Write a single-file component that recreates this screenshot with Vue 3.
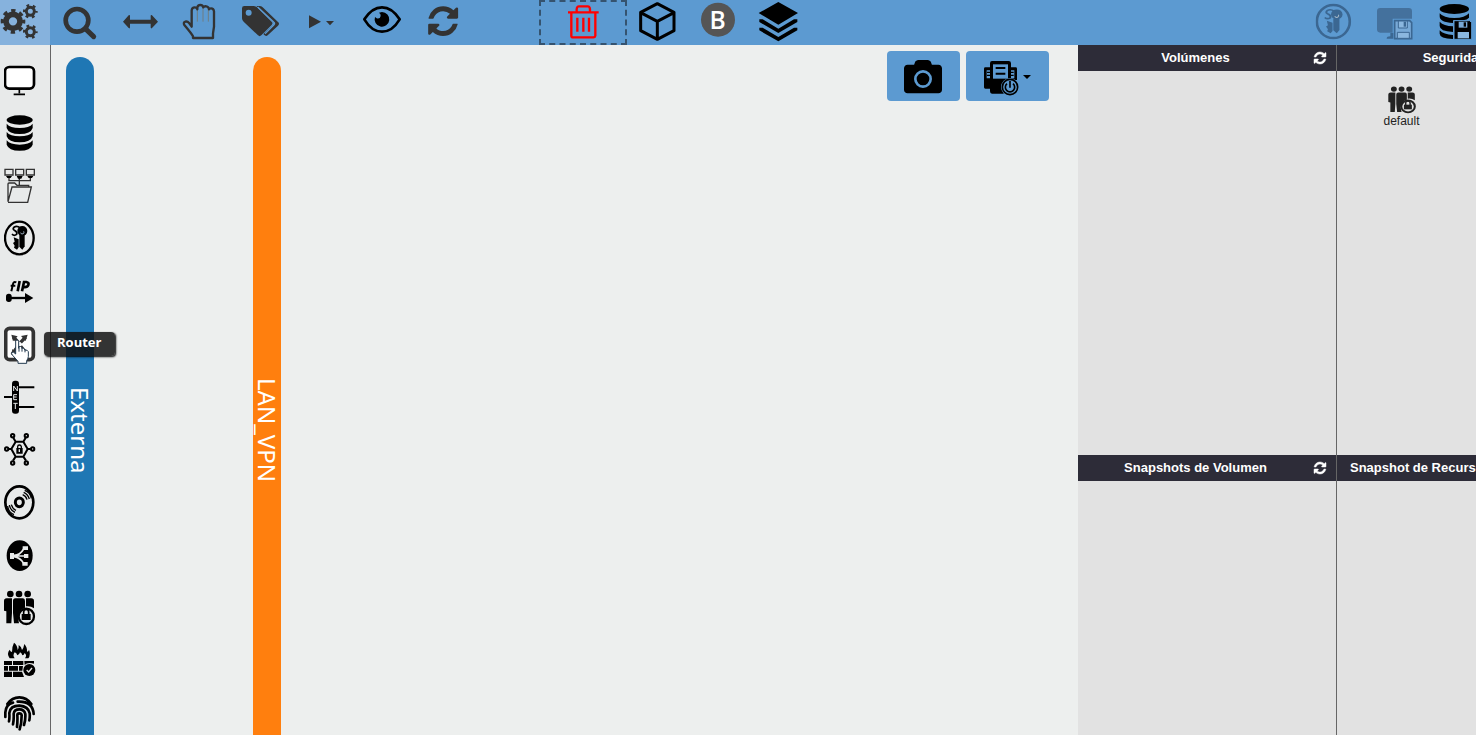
<script setup>
import { ref } from 'vue'

const networks = ref([
  { name: 'Externa', tone: 'blue' },
  { name: 'LAN_VPN', tone: 'orange' },
])

const panels = ref([
  { title: 'Volúmenes', items: [] },
  { title: 'Seguridad', items: ['default'] },
  { title: 'Snapshots de Volumen', items: [] },
  { title: 'Snapshot de Recursos', items: [], wide: true },
])

const refreshPath =
  'M1639 1056q0 5-1 7-64 268-268 434.5t-478 166.5q-146 0-282.5-55t-243.5-157l-129 129q-19 19-45 19t-45-19-19-45v-448q0-26 19-45t45-19h448q26 0 45 19t19 45-19 45l-137 137q71 66 161 102t187 36q134 0 250-65t186-179q11-17 53-117 8-23 30-23h192q13 0 22.5 9.5t9.5 22.5zm25-800v448q0 26-19 45t-45 19h-448q-26 0-45-19t-19-45 19-45l138-138q-148-137-349-137-134 0-250 65t-186 179q-11 17-53 117-8 23-30 23h-199q-13 0-22.5-9.5t-9.5-22.5v-7q65-268 270-434.5t480-166.5q146 0 284 55.5t245 156.5l130-129q19-19 45-19t45 19 19 45z'
</script>

<template>
  <div class="app">
    <svg class="defs" aria-hidden="true">
      <symbol id="people" viewBox="11 193 95 108" preserveAspectRatio="none">
        <circle cx="31" cy="205" r="10" /><circle cx="57" cy="205" r="10" /><circle cx="83" cy="205" r="10" />
        <path d="M12 226q0-8 8-8h16v44l-2 31H19v-36l-7-2zM39 226q0-8 7-8h23q6 0 6 8v20q-20 6-21 30l3 17H42l-3-31zM78 218h16q8 0 8 8v22q-10-8-24-6z" />
        <circle cx="79" cy="272" r="23" fill="none" stroke="currentColor" stroke-width="7" />
        <path d="M65 265h27v18H65z" />
        <path d="M71 266v-7a7.500 7.500 0 0 1 15 0v7" fill="none" stroke="currentColor" stroke-width="5" />
      </symbol>
      <symbol id="keys" viewBox="12 31 93 108" preserveAspectRatio="none">
        <ellipse cx="58" cy="85" rx="43" ry="49" fill="none" stroke="currentColor" stroke-width="7" />
        <circle cx="67" cy="64" r="15" />
        <path d="M58 76h16v34l-7 10-9-9z" />
        <path d="M41 83l15 6v24l-5 7-9-6 2-6-5-8 5-4z" />
        <path d="M61 55q-10-8-18-3-7 6 0 10 10 5 7 12-8 6-14-1" fill="none" stroke="currentColor" stroke-width="5" />
        <path d="M62 69a5 5 0 1 0 9-4" fill="none" stroke="#9fb3c4" stroke-width="3" />
      </symbol>
    </svg>

    <header class="toolbar">
      <button class="tool active" aria-label="Configuración">
        <svg width="50" height="45" viewBox="0 0 150 135">
          <circle cx="39" cy="64" r="21" fill="none" stroke="currentColor" stroke-width="17" />
          <circle cx="39" cy="64" r="32" fill="none" stroke="currentColor" stroke-width="10" stroke-dasharray="13 12.130" stroke-dashoffset="6.500" />
          <circle cx="91" cy="34" r="12" fill="none" stroke="currentColor" stroke-width="9" />
          <circle cx="91" cy="34" r="18" fill="none" stroke="currentColor" stroke-width="8" stroke-dasharray="8 10.850" stroke-dashoffset="4" />
          <circle cx="91" cy="95" r="12" fill="none" stroke="currentColor" stroke-width="9" />
          <circle cx="91" cy="95" r="18" fill="none" stroke="currentColor" stroke-width="8" stroke-dasharray="8 10.850" stroke-dashoffset="4" />
        </svg>
      </button>
      <button class="tool" aria-label="Buscar">
        <svg width="60" height="45" viewBox="150 0 180 135">
          <circle cx="231" cy="61" r="34" fill="none" stroke="currentColor" stroke-width="14" />
          <path d="M256 86l25 24" stroke="currentColor" stroke-width="15" stroke-linecap="round" />
        </svg>
      </button>
      <button class="tool" aria-label="Ancho">
        <svg width="60" height="45" viewBox="330 0 180 135">
          <path d="M369 65l17-19q4-3 4 2v11h62V48q0-5 4-2l18 19-18 19q-4 3-4-2V71h-62v11q0 5-4 2z" />
        </svg>
      </button>
      <button class="tool" aria-label="Mover">
        <svg width="60" height="45" viewBox="510 0 180 135">
          <path d="M592 29v36M609 22v43M625 29v36" fill="none" stroke="#6f7d82" stroke-width="3" />
          <path d="M575 76V31q1-9 9-9 7 0 8 6V22q2-7 9-7t9 7q2-4 9-3 7 1 8 9 1-3 6-3 8 0 9 9v46l-3 20v14H579v-5q-4-8-26-34-4-8 3-10 6-2 12 5l7 10z" fill="none" stroke="currentColor" stroke-width="7" stroke-linejoin="round" />
        </svg>
      </button>
      <button class="tool" aria-label="Etiquetas">
        <svg width="60" height="45" viewBox="0 0 180 135">
          <path fill-rule="evenodd" d="M36 25q0-7 7-7h28q6 0 10 4l44 43q5 5 0 10l-31 31q-5 5-10 0L41 65q-5-5-5-10zM56 29a9 9 0 1 0 0 18 9 9 0 0 0 0-18z" />
          <path d="M79 18h9q6 0 10 4l46 44q6 5 0 11l-31 29q-4 4-9 0l-4-4 32-29q2-3 0-5z" />
          <path d="M83 21l48 45q5 4 1 8l-27 27" fill="none" stroke="#5c9ad1" stroke-width="4" />
        </svg>
      </button>
      <button class="tool" aria-label="Ejecutar">
        <svg width="62" height="45" viewBox="180 0 186 135"><path d="M237 46l36 19-36 20zM288 63h24l-12 13z" /></svg>
      </button>
      <button class="tool black" aria-label="Ver">
        <svg width="60" height="45" viewBox="366 0 180 135">
          <path d="M403 58Q426 22 456 22T509 58Q487 95 456 95T403 58z" fill="none" stroke="currentColor" stroke-width="8" stroke-linejoin="round" />
          <path d="M456 36a22 22 0 1 1-21 15l5 4q10 3 12-7 1-6-5-10z" />
        </svg>
      </button>
      <button class="tool" aria-label="Actualizar">
        <svg width="62" height="45" viewBox="546 0 186 135"><path :d="refreshPath" transform="translate(587 11) scale(.0585)" /></svg>
      </button>
      <button class="tool trash" aria-label="Eliminar">
        <svg width="84" height="41" viewBox="33 6 252 123">
          <g fill="none" stroke="#ff0000" stroke-width="7">
            <path d="M114 37h92M124 38v69q0 5 6 5h60q5 0 6-5V38M140 35q-1-16 6-16h28q7 0 6 16" />
            <path d="M142 53v42M160 53v42M177 53v42" />
          </g>
        </svg>
      </button>
      <button class="tool black" aria-label="Recursos">
        <svg width="61" height="45" viewBox="291 0 183 135">
          <path d="M382 11l50 26v55l-50 26-50-26V37zM332 38l50 26 50-26M382 64v54" fill="none" stroke="currentColor" stroke-width="9" stroke-linejoin="round" />
        </svg>
      </button>
      <button class="tool" aria-label="Bloques">
        <svg width="60" height="45" viewBox="474 0 180 135">
          <circle cx="564" cy="59" r="51" fill="#555" />
          <text class="letter" x="563" y="86" text-anchor="middle">B</text>
        </svg>
      </button>
      <button class="tool black" aria-label="Capas">
        <svg width="60" height="45" viewBox="654 0 180 135">
          <path d="M745 6l59 33-59 35-59-35zM688 58h10l47 28 47-28h10v8l-57 33-57-33zM688 83h10l47 28 47-28h10v8l-57 33-57-33z" />
        </svg>
      </button>
      <div class="tools-end">
        <button class="tool off" aria-label="Llaves" disabled>
          <svg width="62" height="45" viewBox="36 0 186 135"><use href="#keys" x="77" y="10" width="107" height="109" /></svg>
        </button>
        <button class="tool off" aria-label="Guardar instancia" disabled>
          <svg width="60" height="45" viewBox="222 0 180 135">
            <path d="M261 34q0-10 10-10h85q10 0 10 10v22h-58v42h-37q-10 0-10-10z" fill="#44719d" />
            <path d="M301 99v10q-11 0-11 7h20V99z" />
            <path d="M314 62h45l6 6v48h-51z" fill="#78a9d6" stroke="currentColor" stroke-width="5" />
            <path d="M325 63h27v21h-27zM322 97h36v18h-36z" fill="#8bb7df" stroke="currentColor" stroke-width="3" />
            <path d="M341 65h7v15h-7z" />
          </svg>
        </button>
        <button class="tool black last" aria-label="Guardar volumen">
          <svg width="42" height="45" viewBox="432 0 126 135">
            <ellipse cx="493" cy="27" rx="44" ry="15" />
            <path d="M449 40q12 14 44 14t44-14v13q-5 6-18 8h-30v8q-40-2-40-20zM449 65q12 13 40 14v17q-40-2-40-18zM449 91q12 13 40 14v12q-40-2-40-16z" />
            <path d="M492 62h47l6 6v50h-53z" stroke="#5c9ad1" stroke-width="3" />
            <path d="M506 65h26v18h-26z" fill="#78a9d6" /><path d="M521 67h7v13h-7z" />
            <path d="M503 96h34v19h-34z" fill="#8ab7df" />
          </svg>
        </button>
      </div>
    </header>

    <div class="workspace">
      <nav class="sidebar" aria-label="Elementos">
        <button aria-label="Instancia">
          <svg viewBox="12 21 96 108"><rect x="15" y="36" width="87" height="65" rx="13" fill="#fff" stroke="currentColor" stroke-width="8" /><path d="M58 101v14M41 118h34" stroke="currentColor" stroke-width="5" /></svg>
        </button>
        <button aria-label="Volumen">
          <svg viewBox="12 179 96 108">
            <ellipse cx="59" cy="194" rx="39" ry="14" />
            <path d="M20 205q10 13 39 13t39-13v13q-6 18-39 18t-39-18zM20 230q10 13 39 13t39-13v13q-6 18-39 18t-39-18zM20 255q10 13 39 13t39-13v13q-6 18-39 18t-39-18z" />
          </svg>
        </button>
        <button aria-label="Sistema de archivos">
          <svg viewBox="12 337 96 108">
            <g fill="none" stroke="#333" stroke-width="4"><path d="M15 341h24v17H15zM47 341h24v17H47zM79 341h24v17H79zM27 361v14h64v-14M58 361v28M24 438V385q0-3 3-3h17l7 7h35v7M24 438l12-44h58l-11 46H24" /></g>
            <path d="M18 361h18l-4 6h-10zM50 361h18l-4 8h-10zM82 361h18l-4 6h-10z" />
          </svg>
        </button>
        <button aria-label="Par de llaves">
          <svg viewBox="12 31 96 108"><use href="#keys" x="12" y="31" width="93" height="108" /></svg>
        </button>
        <button aria-label="IP flotante">
          <svg viewBox="12 189 96 108">
            <g fill="none" stroke="currentColor" stroke-width="7"><path d="M49 217q-8-4-10 5l-5 22M32 227h14" stroke-width="6" /><path d="M59 213l-6 31" stroke-width="8" /><path d="M66 244l6-28h7q9 2 6 9-3 8-15 6" stroke-width="8" /><path d="M24 264h56" /></g>
            <rect x="18" y="251" width="17" height="25" rx="8" /><path d="M75 249l25 15-25 15z" />
          </svg>
        </button>
        <div class="hovered">
          <button aria-label="Router" aria-describedby="router-tip">
            <svg viewBox="12 347 96 108">
              <rect x="17" y="354" width="83" height="94" rx="12" fill="#fff" stroke="#333" stroke-width="11" />
              <g stroke="#333" stroke-width="10"><path d="M40 380l15 16M77 380L62 396M36 432l19-26M81 431L62 408" /></g>
              <path d="M34 373l5 20 14-15zM83 373l-20 4 14 15zM34 434l3-18 14 13z" fill="#333" />
            </svg>
          </button>
          <span id="router-tip" class="tooltip" role="tooltip">Router</span>
          <svg class="pointer" viewBox="34 390 57 75" aria-hidden="true">
            <path d="M48 397q0-4 4-4t5 4v21l1-5q5-2 8 2v3q5-2 8 2l1 3q9-1 11 5v15q-1 7-5 12v8H55v-6L38 438q-4-5-1-8 4-3 11 5z" fill="#fff" stroke="#243b50" stroke-width="3" stroke-linejoin="round" />
            <path d="M58 416v12M67 418v10M76 421v9" stroke="#243b50" stroke-width="3" />
          </svg>
        </div>
        <button aria-label="Red">
          <svg viewBox="12 40 96 108">
            <path d="M12 94h24M56 65h47M56 124h47" stroke="currentColor" stroke-width="6" />
            <rect x="36" y="45" width="21" height="99" rx="9" />
            <g fill="none" stroke="#e8eaea" stroke-width="3"><path d="M41 76V61l11 15V61M51 87H41v15h10M41 94h9M40 113h13M46 113v17" /></g>
          </svg>
        </button>
        <button aria-label="VPN">
          <svg viewBox="12 199 96 108">
            <g fill="none" stroke="currentColor" stroke-width="6"><path d="M47 231h23l13 22-13 23H47l-13-23zM47 231l-8-13M70 231l8-13M34 253h-9M83 253h9M47 276l-8 12M70 276l8 12" /><circle cx="38" cy="213" r="5" /><circle cx="79" cy="213" r="5" /><circle cx="20" cy="253" r="5" /><circle cx="98" cy="253" r="5" /><circle cx="38" cy="295" r="5" /><circle cx="79" cy="295" r="5" /><path d="M53 252v-6q0-5 5-5t6 5v6" stroke-width="4" /></g>
            <path fill-rule="evenodd" d="M49 250h19v17H49zM56 254v8h4v-8z" />
          </svg>
        </button>
        <button aria-label="Imagen">
          <svg viewBox="12 357 96 108">
            <g fill="none" stroke="currentColor"><ellipse cx="58" cy="412" rx="42" ry="48" stroke-width="8" /><ellipse cx="58" cy="412" rx="12" ry="13" stroke-width="9" /><path d="M68 389q10 4 13 15M71 382q13 6 17 20M74 376q17 6 20 24M48 436q-11-5-14-17M45 442q-14-6-17-22M42 449q-17-7-19-26" stroke-width="4" /></g>
          </svg>
        </button>
        <button aria-label="Balanceador">
          <svg viewBox="12 35 96 108">
            <ellipse cx="59" cy="91" rx="39" ry="46" /><g fill="none" stroke="#e8eaea" stroke-width="5"><path d="M41 92h38M42 90q18 0 29-19M42 94q18 2 29 20" /></g><path d="M30 83h12v18H30zM68 63h16v11H68zM72 86h13v12H72zM67 110h16v11H67z" fill="#e8eaea" />
          </svg>
        </button>
        <button aria-label="Grupo de seguridad">
          <svg viewBox="12 193 96 108"><use href="#people" x="11" y="193" width="95" height="108" /></svg>
        </button>
        <button aria-label="Cortafuegos">
          <svg viewBox="12 352 96 108">
            <path d="M29 401q-10-15 0-26 3 7 7 7 0-17 6-28 10 7 11 22 4-5 3-15 9 5 10 15 5-6 7-18 9 10 8 23 5 0 6-6 6 15-2 26H75q7-9-1-16-2 7-7 7-2-8-7-9-2 8-8 9-2-7-8-9-7 10 0 18z" />
            <path d="M12 409h24v12H12zM39 409h31v12H39zM73 409h29v8q-20-6-28 4zM12 424h12v14H12zM27 424h27v14H27zM57 424h12l-2 14H57zM12 441h24v16H12zM39 441h27l6 16H39z" />
            <circle cx="88" cy="436" r="18" /><path d="M80 436l6 6 10-12" fill="none" stroke="#e8eaea" stroke-width="4" />
          </svg>
        </button>
        <button aria-label="Huella">
          <svg viewBox="12 510 96 108">
            <g fill="none" stroke="currentColor" stroke-width="8" stroke-linecap="round">
              <path d="M22 537q14-20 36-20t36 20M16 576V562q2-24 23-29M53 530q45-2 48 37M27 589q2-9 1-25 3-22 30-22 27 2 31 23 1 10-1 21M39 598q3-15 2-32 2-13 17-13t18 14q1 18-4 33M51 606q2-19 1-36 0-5 6-5t7 6q0 25-6 42" />
            </g>
          </svg>
        </button>
      </nav>

      <main class="canvas">
        <div v-for="net in networks" :key="net.name" class="network" :class="net.tone">
          <span>{{ net.name }}</span>
        </div>
        <div class="actions">
          <button aria-label="Captura">
            <svg width="73" height="50" viewBox="51 33 219 150">
              <path transform="translate(102 53) scale(.2227)" d="M512 144v288c0 26.500-21.500 48-48 48H48c-26.500 0-48-21.500-48-48V144c0-26.500 21.500-48 48-48h88l12.300-32.900c7-18.700 24.900-31.100 44.900-31.100h125.500c20 0 37.900 12.400 44.900 31.100L376 96h88c26.500 0 48 21.500 48 48z" />
              <circle cx="159" cy="117" r="23" fill="none" stroke="#5c9ad1" stroke-width="8" />
            </svg>
          </button>
          <button aria-label="Energía">
            <svg width="83" height="50" viewBox="288 33 249 150">
              <path d="M346 82h14v64h-14q-4 0-4-4V86q0-4 4-4zM423 82h14q4 0 4 4v34h-18z" />
              <path d="M350 91h10v24h-10zM423 91h10v24h-10z" fill="#5c9ad1" />
              <path d="M351 97h9M351 106h9M423 97h8M423 106h8" stroke="currentColor" stroke-width="4" />
              <path d="M366 63h50q7 0 7 7v50q-22 2-26 22 0 12 5 19h-36q-6 0-6-7V70q0-7 6-7z" />
              <path d="M369 73h45v43h-45z" fill="#5c9ad1" /><path d="M377 84h29M377 101h29" stroke="currentColor" stroke-width="6" />
              <circle cx="420" cy="141" r="27" fill="#5c9ad1" /><circle cx="420" cy="141" r="23" fill="none" stroke="currentColor" stroke-width="5" />
              <path d="M411 131a14 14 0 1 0 18 0M420 123v20" fill="none" stroke="currentColor" stroke-width="5" />
              <path d="M459 105h24l-12 12z" />
            </svg>
          </button>
        </div>
      </main>

      <aside class="panels">
        <section v-for="panel in panels" :key="panel.title" class="panel">
          <header class="panel-head" :class="{ wide: panel.wide }">
            <h2>{{ panel.title }}</h2>
            <button :aria-label="'Actualizar ' + panel.title">
              <svg width="14" height="14" viewBox="0 0 1792 1792"><path :d="refreshPath" stroke="currentColor" stroke-width="60" /></svg>
            </button>
          </header>
          <ul>
            <li v-for="item in panel.items" :key="item">
              <svg width="28" height="28"><use href="#people" width="28" height="28" /></svg>
              <span>{{ item }}</span>
            </li>
          </ul>
        </section>
      </aside>
    </div>
  </div>
</template>

<style>
html,
body {
  overflow: hidden;
}
</style>

<style scoped>
.app {
  display: flex;
  flex-direction: column;
  height: 100vh;
  overflow: hidden;
  background: #edefee;
  font-family: "Liberation Sans", Arial, sans-serif;
}
.defs {
  position: absolute;
  width: 0;
  height: 0;
}
button {
  padding: 0;
  border: 0;
  background: none;
  color: inherit;
  cursor: pointer;
}
svg {
  display: block;
  fill: currentColor;
}
.toolbar {
  display: flex;
  flex: none;
  height: 45px;
  background: #5c9ad1;
  color: #333;
}
.tool {
  flex: none;
}
.active {
  background: #86b2dd;
}
.black {
  color: #000;
}
.off {
  color: #3b6792;
}
.trash {
  margin-left: 65px;
  border: 2px dashed #35536f;
}
.letter {
  font: 600 74px "Open Sans", "Noto Sans", sans-serif;
  fill: #fff;
}
.tools-end {
  display: flex;
  margin-left: auto;
}
.last {
  margin-left: 10px;
}
.workspace {
  display: flex;
  flex: 1;
  min-height: 0;
}
.sidebar {
  display: flex;
  flex: none;
  flex-direction: column;
  justify-content: space-between;
  box-sizing: border-box;
  width: 51px;
  padding: 17px 0 4px 4px;
  border-right: 1px solid #666;
  background: #e8eaea;
}
.sidebar button {
  display: block;
  width: 32px;
  height: 36px;
}
.hovered {
  position: relative;
}
.tooltip {
  position: absolute;
  z-index: 2;
  top: 6px;
  left: 40px;
  padding: 0 14px 4px 13px;
  border-radius: 4px;
  background: rgba(16, 16, 16, 0.84);
  box-shadow: 1px 1px 2px #000;
  color: #fff;
  font: 700 13px/20px "Open Sans", "Noto Sans", sans-serif;
}
.pointer {
  position: absolute;
  top: 13px;
  left: 7px;
  width: 19px;
  height: 25px;
}
.canvas {
  display: flex;
  flex: 1;
  align-items: flex-start;
  min-width: 0;
  padding: 12px 0 0 15px;
  overflow: hidden;
}
.network {
  display: flex;
  flex: none;
  align-items: center;
  justify-content: center;
  width: 28px;
  height: calc(100vh + 11px);
  margin-right: 159px;
  border-radius: 14px;
  color: #fff;
  font: 24px/28px "Noto Sans", sans-serif;
  writing-mode: vertical-rl;
}
.blue {
  background: #1f77b4;
}
.orange {
  background: #ff7f0e;
}
.actions {
  display: flex;
  gap: 6px;
  margin: -6px 29px 0 auto;
}
.actions button {
  border-radius: 4px;
  background: #5c9ad1;
  color: #000;
}
.panels {
  display: grid;
  flex: none;
  grid-template-columns: 258px 259px;
  grid-auto-rows: 410px;
  width: 398px;
  overflow: hidden;
  background: #e2e2e2;
}
.panel:nth-child(even) {
  border-left: 1px solid #666;
}
.panel-head {
  display: flex;
  align-items: center;
  height: 26px;
  padding-right: 9px;
  background: #2d2c38;
  color: #fff;
}
h2 {
  flex: 1;
  margin: 0;
  font-size: 13px;
  line-height: 26px;
  text-align: center;
  white-space: nowrap;
}
.wide h2 {
  padding-left: 13px;
  text-align: left;
}
ul {
  display: flex;
  flex-wrap: wrap;
  margin: 0;
  padding: 15px 0 0;
  list-style: none;
}
li {
  display: flex;
  flex-direction: column;
  align-items: center;
  width: 50%;
  color: #222;
  font-size: 12px;
  line-height: 14px;
}
</style>
